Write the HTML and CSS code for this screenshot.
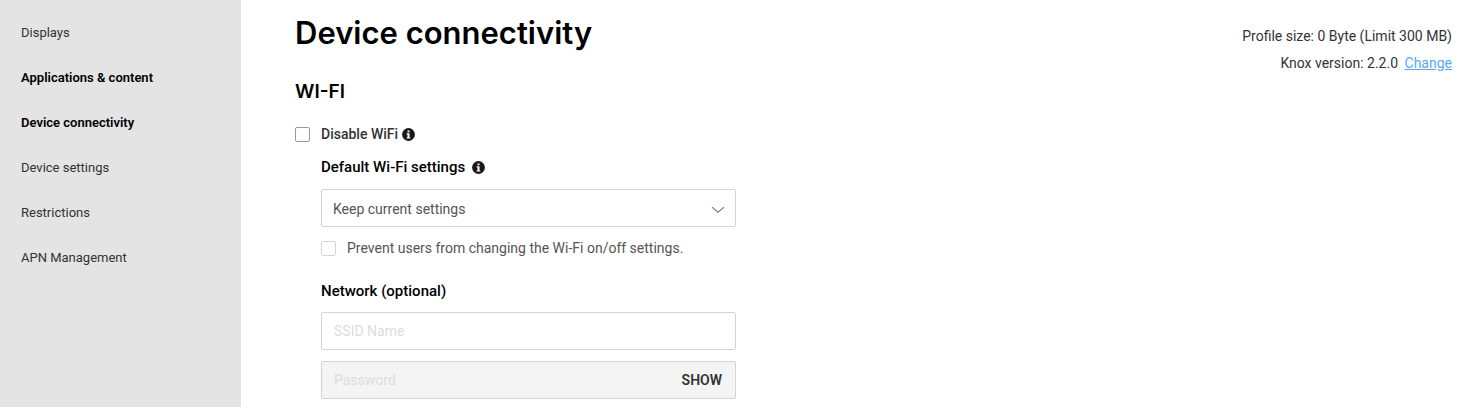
FILE: index.html
```html
<!DOCTYPE html>
<html lang="en">
<head>
<meta charset="utf-8">
<meta name="viewport" content="width=device-width, initial-scale=1">
<title>Device connectivity</title>
<link rel="stylesheet" href="styles.css">
</head>
<body>
<div class="layout">
  <nav class="sidebar" aria-label="Profile sections">
    <a class="nav-link" href="#displays">Displays</a>
    <a class="nav-link nav-strong" href="#applications">Applications &amp; content</a>
    <a class="nav-link nav-strong" href="#connectivity" aria-current="page">Device connectivity</a>
    <a class="nav-link" href="#settings">Device settings</a>
    <a class="nav-link" href="#restrictions">Restrictions</a>
    <a class="nav-link" href="#apn">APN Management</a>
  </nav>
  <main class="content">
    <header class="page-header">
      <h1 class="page-title">Device connectivity</h1>
      <div class="profile-meta">
        <p class="meta-line">Profile size: 0 Byte (Limit 300 MB)</p>
        <p class="meta-line">Knox version: 2.2.0 <a class="change-link" href="#change">Change</a></p>
      </div>
    </header>
    <section class="wifi">
      <h2 class="section-title">WI-FI</h2>
      <div class="check-row">
        <input class="checkbox" type="checkbox" id="disable-wifi">
        <label class="check-label check-main" for="disable-wifi">Disable WiFi</label>
        <svg class="info" viewBox="0 0 13 13" role="img" aria-label="Information"><circle cx="6.5" cy="6.5" r="6.4" fill="#1a1718"/><path d="M5.5 2.4h2v1.8h-2zM4.6 5.2h2.9v4.2h.9v1.2H4.6V9.4h.9v-3h-.9z" fill="#fff"/></svg>
      </div>
      <div class="fields">
        <div class="label-row">
          <label class="field-label" for="default-wifi">Default Wi-Fi settings</label>
          <svg class="info" viewBox="0 0 13 13" role="img" aria-label="Information"><circle cx="6.5" cy="6.5" r="6.4" fill="#1a1718"/><path d="M5.5 2.4h2v1.8h-2zM4.6 5.2h2.9v4.2h.9v1.2H4.6V9.4h.9v-3h-.9z" fill="#fff"/></svg>
        </div>
        <div class="select-wrap">
          <select class="control select" id="default-wifi"><option>Keep current settings</option></select>
          <svg class="chevron" viewBox="0 0 14 8" aria-hidden="true"><path d="M1 1.2l6 5L13 1.2" fill="none" stroke="#777" stroke-width="1.1"/></svg>
        </div>
        <div class="check-row prevent-row">
          <input class="checkbox checkbox-light" type="checkbox" id="prevent">
          <label class="check-label" for="prevent">Prevent users from changing the Wi-Fi on/off settings.</label>
        </div>
        <label class="field-label network-label" for="ssid">Network (optional)</label>
        <input class="control" type="text" id="ssid" placeholder="SSID Name">
        <div class="control password-box">
          <input class="password" type="password" placeholder="Password" aria-label="Password">
          <button class="show" type="button">SHOW</button>
        </div>
      </div>
    </section>
  </main>
</div>
</body>
</html>
```
FILE: styles.css
```css
* { box-sizing: border-box; }
body {
  margin: 0;
  background: #fff;
  color: #333;
  font-family: Roboto, "Noto Sans", sans-serif;
  font-size: 14px;
  line-height: 20px;
}
h1, h2, p { margin: 0; }
.layout { display: flex; min-height: 100vh; }
.sidebar {
  flex: none;
  width: 241px;
  padding: 10px 21px;
  background: #e4e4e4;
}
.nav-link {
  display: block;
  font-size: 13px;
  line-height: 45px;
  color: #333;
  text-decoration: none;
}
.nav-strong { color: #000; font-weight: 600; }
.content { flex: 1; padding: 13px 15px 9px 54px; }
.page-header { display: flex; justify-content: space-between; }
.page-title {
  font-family: Inter, "Open Sans", sans-serif;
  font-size: 31px;
  font-weight: 600;
  line-height: 40px;
  color: #000;
}
.profile-meta { padding-top: 10px; text-align: right; }
.meta-line { line-height: 27px; }
.change-link { margin-left: 3px; color: #58a9f4; }
.section-title {
  margin-top: 3px;
  font-family: Inter, "Open Sans", sans-serif;
  font-size: 19px;
  font-weight: 600;
  line-height: 24px;
  color: #000;
}
.check-row { display: flex; align-items: center; }
.wifi > .check-row { margin-top: 20px; }
.checkbox {
  appearance: none;
  width: 15px;
  height: 15px;
  margin: 0 11px 0 0;
  border: 1px solid #999;
  border-radius: 2px;
  background: #fff;
}
.checkbox:checked { background: #58a9f4; }
.checkbox-light { border-color: #d4d4d4; }
.check-label { color: #555; }
.check-main { color: #333; font-weight: 500; }
.info { width: 13px; height: 13px; margin-left: 4px; }
.fields { max-width: 441px; padding-left: 26px; }
.label-row { display: flex; align-items: center; gap: 3px; margin-top: 13px; }
.field-label { display: block; color: #000; font-size: 15px; font-weight: 500; }
.control {
  display: block;
  width: 100%;
  height: 38px;
  padding: 0 12px;
  border: 1px solid #d4d4d4;
  border-radius: 2px;
  background: #fff;
  color: #555;
  font: inherit;
}
.select-wrap { position: relative; margin-top: 12px; }
.select { appearance: none; padding: 2px 11px 0; }
.chevron {
  position: absolute;
  right: 11px;
  top: 17px;
  width: 14px;
  height: 8px;
  pointer-events: none;
}
.prevent-row { margin-top: 11px; }
.network-label { margin: 23px 0 11px; }
.control::placeholder, .password::placeholder { color: #ddd; opacity: 1; }
.password-box { display: flex; margin-top: 11px; background: #f4f4f4; }
.password {
  flex: 1;
  min-width: 0;
  padding: 0;
  border: 0;
  background: transparent;
  font: inherit;
}
.show {
  padding: 0 1px;
  border: 0;
  background: transparent;
  color: #333;
  font: inherit;
  font-weight: 600;
}
```
